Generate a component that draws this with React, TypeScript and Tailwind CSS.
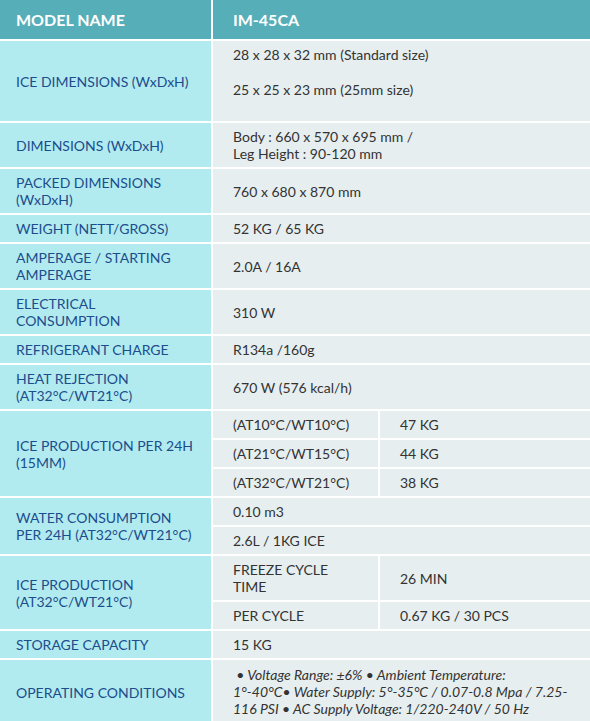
import React from 'react';

type Row = {
  label: React.ReactNode;
  value?: React.ReactNode;
  sub?: [React.ReactNode, React.ReactNode][];
  lines?: React.ReactNode[];
};

const rows: Row[] = [
  { label: 'DIMENSIONS (WxDxH)', value: <>Body : 660 x 570 x 695 mm /<br />Leg Height : 90-120 mm</> },
  { label: <>PACKED DIMENSIONS<br />(WxDxH)</>, value: '760 x 680 x 870 mm' },
  { label: 'WEIGHT (NETT/GROSS)', value: '52 KG / 65 KG' },
  { label: <>AMPERAGE / STARTING<br />AMPERAGE</>, value: '2.0A / 16A' },
  { label: <>ELECTRICAL<br />CONSUMPTION</>, value: '310 W' },
  { label: 'REFRIGERANT CHARGE', value: 'R134a /160g' },
  { label: <>HEAT REJECTION<br />(AT32°C/WT21°C)</>, value: '670 W (576 kcal/h)' },
  {
    label: <>ICE PRODUCTION PER 24H<br />(15MM)</>,
    sub: [
      ['(AT10°C/WT10°C)', '47 KG'],
      ['(AT21°C/WT15°C)', '44 KG'],
      ['(AT32°C/WT21°C)', '38 KG'],
    ],
  },
  { label: <>WATER CONSUMPTION<br />PER 24H (AT32°C/WT21°C)</>, lines: ['0.10 m3', '2.6L / 1KG ICE'] },
  {
    label: <>ICE PRODUCTION<br />(AT32°C/WT21°C)</>,
    sub: [
      [<>FREEZE CYCLE<br />TIME</>, '26 MIN'],
      ['PER CYCLE', '0.67 KG / 30 PCS'],
    ],
  },
  { label: 'STORAGE CAPACITY', value: '15 KG' },
];

const cell = 'px-[20px] py-[5px] bg-[#e6eef0] flex items-center';

function Label({ children }: { children: React.ReactNode }) {
  return (
    <div className="bg-[#b1ebf0] pl-[16px] pr-1 py-[5px] flex items-center text-[#1c4d8c]">
      <div>{children}</div>
    </div>
  );
}

export default function App() {
  return (
    <div
      className="w-[590px] bg-white text-[14px] leading-[17px] text-[#333]"
      style={{ fontFamily: 'Lato, "Open Sans", sans-serif' }}
    >
      <div className="flex flex-col gap-[2px]">
        <div className="grid grid-cols-[211px_1fr] gap-x-[2px] h-[39px] bg-white">
          <div className="bg-[#55aeb8] pl-[16px] flex items-center text-white font-bold text-[16px]">MODEL NAME</div>
          <div className="bg-[#55aeb8] pl-[20px] flex items-center text-white font-bold text-[16px]">IM-45CA</div>
        </div>

        <div className="grid grid-cols-[211px_1fr] gap-x-[2px]">
          <Label>ICE DIMENSIONS (WxDxH)</Label>
          <div className="bg-[#e6eef0] px-[20px] pt-[5px] pb-[23px]">
            <p className="mb-[18px]">28 x 28 x 32 mm (Standard size)</p>
            <p>25 x 25 x 23 mm (25mm size)</p>
          </div>
        </div>

        {rows.map((r, i) => (
          <div key={i} className="grid grid-cols-[211px_1fr] gap-x-[2px]">
            <Label>{r.label}</Label>
            {r.value !== undefined && (
              <div className={cell}>
                <div>{r.value}</div>
              </div>
            )}
            {r.sub && (
              <div className="flex flex-col gap-[2px]">
                {r.sub.map(([a, b], j) => (
                  <div key={j} className="grid grid-cols-[165px_1fr] gap-x-[2px] flex-1">
                    <div className={cell}>
                      <div>{a}</div>
                    </div>
                    <div className={cell}>
                      <div>{b}</div>
                    </div>
                  </div>
                ))}
              </div>
            )}
            {r.lines && (
              <div className="flex flex-col gap-[2px]">
                {r.lines.map((l, j) => (
                  <div key={j} className={cell + ' flex-1'}>
                    <div>{l}</div>
                  </div>
                ))}
              </div>
            )}
          </div>
        ))}

        <div className="grid grid-cols-[211px_1fr] gap-x-[2px]">
          <Label>OPERATING CONDITIONS</Label>
          <div className="bg-[#e6eef0] px-[20px] pt-[6px] pb-[8px] italic whitespace-nowrap">
            &nbsp;• Voltage Range: ±6% • Ambient Temperature:
            <br />
            1°-40°C• Water Supply: 5°-35°C / 0.07-0.8 Mpa / 7.25-
            <br />
            116 PSI • AC Supply Voltage: 1/220-240V / 50 Hz
          </div>
        </div>
      </div>
    </div>
  );
}
